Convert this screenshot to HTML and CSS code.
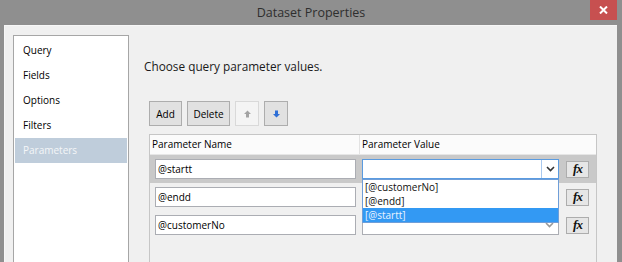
FILE: index.html
```html
<!DOCTYPE html>
<html>
<head>
<meta charset="utf-8">
<title>Dataset Properties</title>
<link rel="stylesheet" href="styles.css">
</head>
<body>
<div class="window">
  <div class="titlebar">
    <div></div>
    <div class="title">Dataset Properties</div>
    <div class="close">
      <svg width="9" height="8" viewBox="0 0 9 8"><path d="M1 0.5 L8 7.5 M8 0.5 L1 7.5" stroke="#fff" stroke-width="2"/></svg>
    </div>
  </div>
  <div class="dialog">
    <nav class="nav">
      <div class="nav-item">Query</div>
      <div class="nav-item">Fields</div>
      <div class="nav-item">Options</div>
      <div class="nav-item">Filters</div>
      <div class="nav-item active">Parameters</div>
    </nav>
    <main class="main">
      <p class="prompt">Choose query parameter values.</p>
      <div class="toolbar">
        <button class="btn btn-add">Add</button>
        <button class="btn btn-delete">Delete</button>
        <button class="btn btn-icon disabled">
          <svg width="7" height="8" viewBox="0 0 7 8"><path d="M3.5 0.5 L7 4 L5 4 L5 7.5 L2 7.5 L2 4 L0 4 Z" fill="#a3a3a3"/></svg>
        </button>
        <button class="btn btn-icon">
          <svg width="7" height="8" viewBox="0 0 7 8"><path d="M2 0.5 L5 0.5 L5 4 L7 4 L3.5 7.5 L0 4 L2 4 Z" fill="#2f6fd6"/></svg>
        </button>
      </div>
      <div class="grid">
        <div class="grid-head">
          <div class="head-name">Parameter Name</div>
          <div class="head-value">Parameter Value</div>
        </div>
        <div class="row selected">
          <div class="cell-name"><div class="textbox">@startt</div></div>
          <div class="cell-value">
            <div class="combo focused">
              <span class="combo-text"></span>
              <span class="combo-arrow"><svg width="9" height="6" viewBox="0 0 9 6"><path d="M1 1 L4.5 4.5 L8 1" fill="none" stroke="#333" stroke-width="1.6"/></svg></span>
            </div>
            <button class="fx">fx</button>
            <ul class="dropdown">
              <li>[@customerNo]</li>
              <li>[@endd]</li>
              <li class="highlight">[@startt]</li>
            </ul>
          </div>
        </div>
        <div class="row">
          <div class="cell-name"><div class="textbox">@endd</div></div>
          <div class="cell-value">
            <div class="combo">
              <span class="combo-text"></span>
              <span class="combo-arrow"><svg width="9" height="6" viewBox="0 0 9 6"><path d="M1 1 L4.5 4.5 L8 1" fill="none" stroke="#777" stroke-width="1.6"/></svg></span>
            </div>
            <button class="fx">fx</button>
          </div>
        </div>
        <div class="row">
          <div class="cell-name"><div class="textbox">@customerNo</div></div>
          <div class="cell-value">
            <div class="combo">
              <span class="combo-text"></span>
              <span class="combo-arrow"><svg width="9" height="6" viewBox="0 0 9 6"><path d="M1 1 L4.5 4.5 L8 1" fill="none" stroke="#999" stroke-width="1.6"/></svg></span>
            </div>
            <button class="fx">fx</button>
          </div>
        </div>
      </div>
    </main>
  </div>
</div>
</body>
</html>
```
FILE: styles.css
```css
* { box-sizing: border-box; }
html, body { margin: 0; padding: 0; }
body {
  width: 622px;
  height: 262px;
  overflow: hidden;
  font-family: "Open Sans", "Noto Sans", sans-serif;
  font-size: 10px;
  color: #000;
}
.window {
  width: 622px;
  height: 262px;
  background: #8f8f8f;
  display: flex;
  flex-direction: column;
  overflow: hidden;
}
.titlebar {
  height: 25px;
  flex: none;
  display: grid;
  grid-template-columns: 1fr auto 1fr;
}
.title {
  font-size: 12.5px;
  line-height: 26px;
  color: #2e2e2e;
}
.close {
  justify-self: end;
  margin-right: 5px;
  width: 27px;
  height: 20px;
  background: #c75050;
  display: flex;
  align-items: center;
  justify-content: center;
}
.dialog {
  flex: 1;
  margin: 0 5px 0 4px;
  background: #f0f0f0;
  border-top: 1px solid #f7f7f7;
  border-left: 1px solid #f7f7f7;
  display: flex;
  padding: 9px 0 0 8px;
  min-height: 0;
}
.nav {
  width: 116px;
  flex: none;
  background: #fff;
  border: 1px solid #a6a6a6;
  border-bottom: none;
  padding: 2px 1px 0 1px;
}
.nav-item {
  height: 25px;
  line-height: 25px;
  padding-left: 8px;
  color: #000;
}
.nav-item.active {
  background: #bfcddb;
  color: #f4f6f8;
}
.main {
  flex: 1;
  min-width: 0;
  padding-right: 20px;
  display: flex;
  flex-direction: column;
}
.prompt {
  margin: 22px 0 0 15px;
  font-size: 11.8px;
  line-height: 18px;
  color: #1a1a1a;
}
.toolbar {
  margin: 26px 0 0 20px;
  display: flex;
  gap: 5px;
}
.btn {
  height: 25px;
  padding: 0;
  margin: 0;
  font: inherit;
  font-size: 10px;
  color: #000;
  background: #e1e1e1;
  border: 1px solid #adadad;
  display: flex;
  align-items: center;
  justify-content: center;
}
.btn-add { width: 33px; }
.btn-delete { width: 43px; }
.btn-icon { width: 24px; }
.btn-icon.disabled {
  background: #f4f4f4;
  border-color: #d9d9d9;
}
.grid {
  margin: 8px 0 0 20px;
  width: 448px;
  height: 160px;
  flex: none;
  border: 1px solid #c6c6c6;
  border-bottom: none;
  background: #f0f0f0;
}
.grid-head {
  display: flex;
  height: 20px;
  background: #fbfbfb;
  border-bottom: 1px solid #e6e6e6;
}
.head-name {
  width: 209px;
  padding-left: 2px;
  line-height: 19px;
}
.head-value {
  flex: 1;
  border-left: 1px solid #e3e3e3;
  padding-left: 2px;
  line-height: 19px;
}
.row {
  display: flex;
  height: 28px;
}
.row.selected { background: #c9c9c9; }
.cell-name {
  width: 209px;
  padding: 4px 0 0 5px;
}
.textbox {
  width: 201px;
  height: 20px;
  background: #fff;
  border: 1px solid #abadb3;
  padding-left: 2px;
  line-height: 18px;
  color: #000;
}
.cell-value {
  flex: 1;
  position: relative;
  display: flex;
  align-items: flex-start;
  padding: 4px 0 0 3px;
}
.combo {
  width: 197px;
  height: 20px;
  background: #fff;
  border: 1px solid #abadb3;
  display: flex;
}
.combo.focused { border-color: #5a9be0; }
.combo-text { flex: 1; }
.combo-arrow {
  width: 17px;
  display: flex;
  align-items: center;
  justify-content: center;
}
.combo.focused .combo-arrow { border-left: 1px solid #a9c9ef; }
.fx {
  margin: 2px 0 0 7px;
  width: 23px;
  height: 17px;
  padding: 0 0 1px 0;
  background: #e6e6e6;
  border: 1px solid #adadad;
  font-family: "Liberation Serif", serif;
  font-style: italic;
  font-weight: bold;
  font-size: 13px;
  line-height: 14px;
  color: #111;
  letter-spacing: -0.8px;
}
.dropdown {
  position: absolute;
  top: 24px;
  left: 3px;
  width: 197px;
  margin: 0;
  padding: 0;
  list-style: none;
  background: #fff;
  border: 1px solid #6f9ed8;
  z-index: 5;
}
.dropdown li {
  height: 14px;
  line-height: 14px;
  padding-left: 2px;
  color: #111;
  font-size: 10px;
}
.dropdown li.highlight {
  background: #3399f3;
  color: #eaf4ff;
}
```
